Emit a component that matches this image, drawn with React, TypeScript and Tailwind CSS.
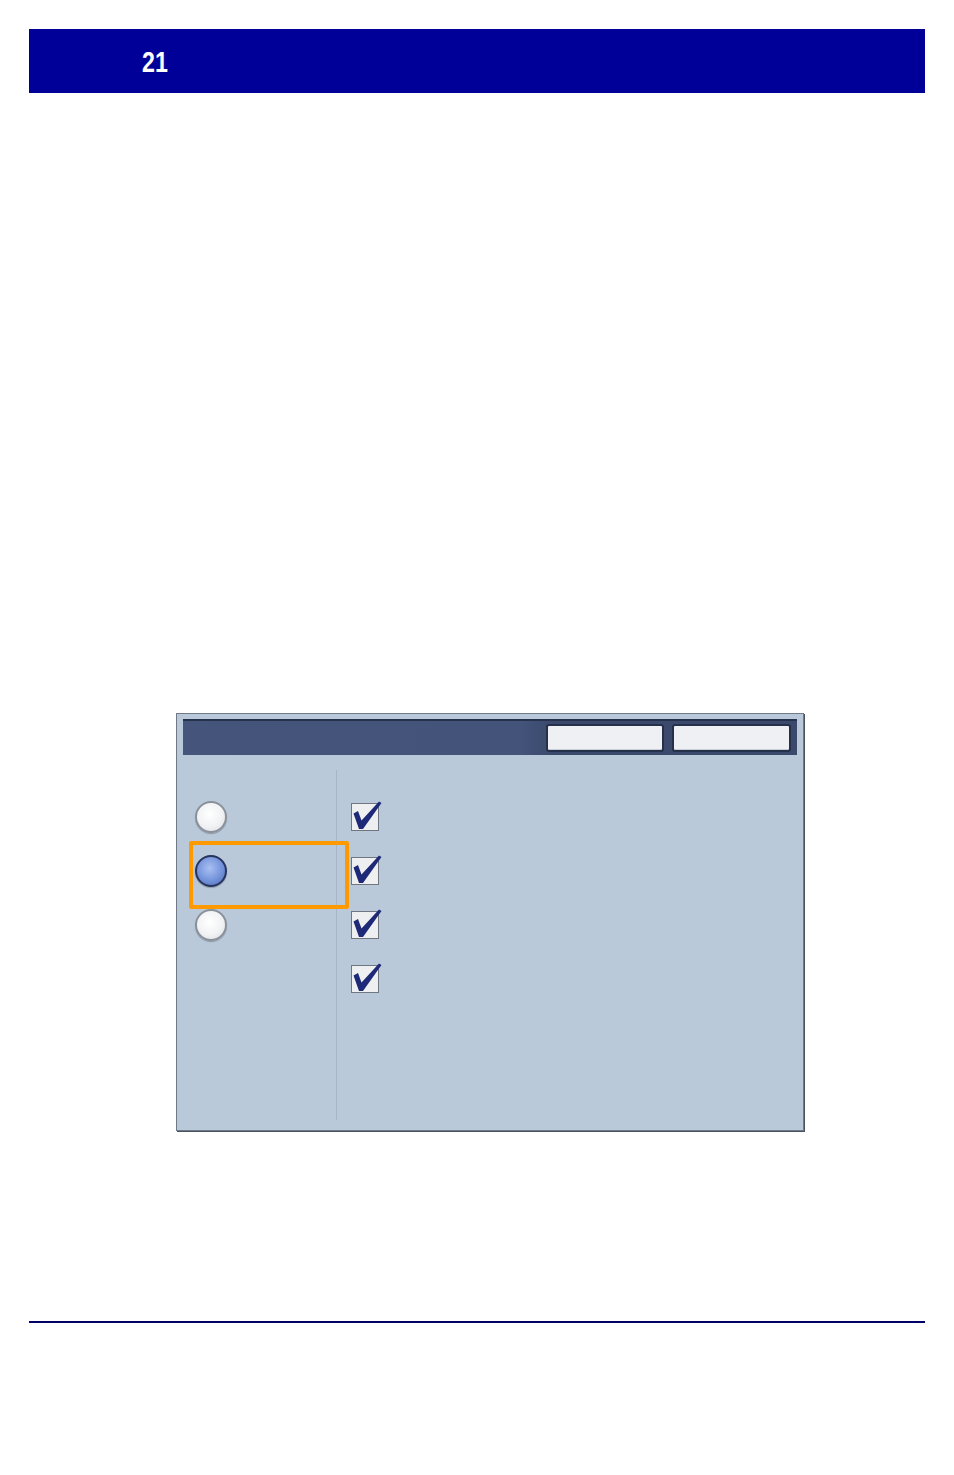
import React from 'react';

function Radio({ selected }: { selected?: boolean }) {
  return (
    <div
      className={`w-[32px] h-[32px] rounded-full border-2 ${
        selected
          ? 'border-[#26335e] bg-[radial-gradient(circle_at_45%_40%,#a9c0f2_0%,#7393da_55%,#4d68b0_100%)]'
          : 'border-[#8a9099] bg-[radial-gradient(circle_at_45%_40%,#ffffff_0%,#f1f2f4_55%,#d6d9de_100%)]'
      } shadow-[0_1px_1px_rgba(0,0,0,0.25)]`}
    />
  );
}

function Check() {
  return (
    <svg width="32" height="30" viewBox="0 0 32 30">
      <rect x="0.5" y="2.5" width="27" height="27" fill="#eeeff1" stroke="#6f7680" strokeWidth="1" />
      <path
        d="M2.5 12.5 L7 10 L10.5 19.5 L28 0.5 L30.5 2 L12 28 L8 28 Z"
        fill="#1e2a78"
      />
    </svg>
  );
}

export default function App() {
  return (
    <div className="w-[954px] min-h-[1475px] bg-white px-[29px] pt-[29px]" style={{ fontFamily: '"Liberation Sans", Arial, sans-serif' }}>
      <div className="h-[64px] bg-[#000099] flex items-center pl-[113px]">
        <span className="inline-block origin-left scale-x-[0.8] text-white font-bold text-[29px] leading-none pt-[2px]">
          21
        </span>
      </div>

      <div className="mt-[620px] ml-[147px] w-[628px] h-[418px] border border-[#707a86] bg-[#b9c9da] shadow-[1px_1px_0_#4a5260] flex flex-col">
        <div className="mt-[5px] mx-[6px] h-[36px] border-t-2 border-[#26314c] bg-[linear-gradient(90deg,#44547a_0%,#43537a_55%,#3b4a6c_60%,#3b4a6c_100%)] flex items-center justify-end gap-[8px] pr-[6px]">
          <div className="w-[118px] h-[28px] rounded-[3px] bg-[#eef0f3] border-2 border-[#25304a] shadow-[inset_0_-1px_0_#c8ccd4]" />
          <div className="w-[119px] h-[28px] rounded-[3px] bg-[#eef0f3] border-2 border-[#25304a] shadow-[inset_0_-1px_0_#c8ccd4]" />
        </div>

        <div className="relative flex flex-1 pt-[15px] pb-[10px]">
          <div className="w-[160px] border-r border-[#a6b6c8] pt-[31px] pl-[18px] flex flex-col gap-[22px]">
            <Radio />
            <Radio selected />
            <Radio />
          </div>
          <div className="pt-[31px] pl-[14px] flex flex-col gap-[24px]">
            <Check />
            <Check />
            <Check />
            <Check />
          </div>

          <div className="absolute left-[12px] top-[86px] w-[160px] h-[68px] border-[4px] border-[#ff9900] rounded-[2px]" />
        </div>
      </div>

      <div className="mt-[190px] h-[2px] bg-[#000066]" />
    </div>
  );
}
